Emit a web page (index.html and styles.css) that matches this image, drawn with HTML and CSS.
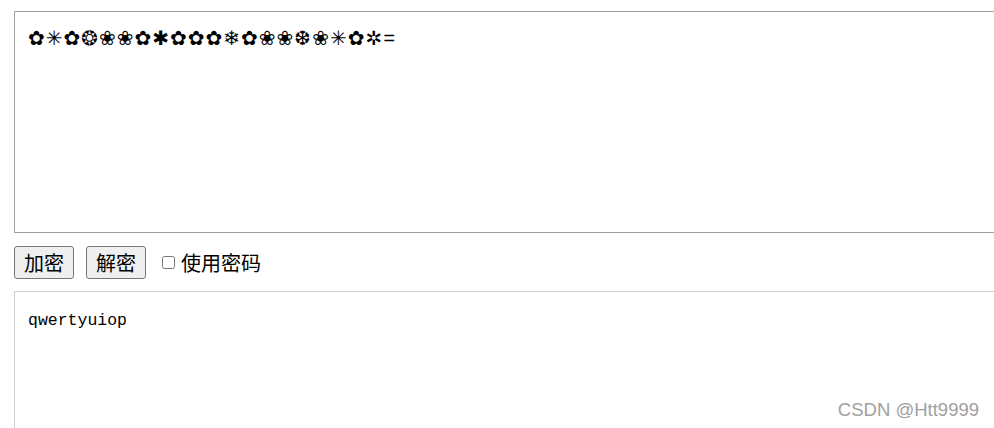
FILE: index.html
```html
<!DOCTYPE html>
<html lang="zh">
<head>
<meta charset="utf-8">
<title>加密解密</title>
<link rel="stylesheet" href="styles.css">
</head>
<body>
<div class="page">
  <textarea class="box box-top">✿✳✿❂❀❀✿✱✿✿✿❄✿❀❀❆❀✳✿✲=</textarea>
  <div class="controls">
    <button class="btn" type="button">加密</button>
    <button class="btn" type="button">解密</button>
    <label class="opt"><input type="checkbox" class="chk">使用密码</label>
  </div>
  <textarea class="box box-bottom">qwertyuiop</textarea>
</div>
<div class="watermark">CSDN @Htt9999</div>
</body>
</html>
```
FILE: styles.css
```css
html, body {
  margin: 0;
  padding: 0;
  overflow: hidden;
  background: #fff;
}
.page {
  padding: 11px 0 0 14px;
  display: flex;
  flex-direction: column;
  align-items: flex-start;
}
.box {
  box-sizing: border-box;
  width: 1100px;
  margin: 0;
  resize: none;
  outline: none;
  background: #fff;
  color: #000;
  font-family: "Liberation Mono", "DejaVu Sans", "Noto Sans CJK SC", monospace;
  font-size: 16.5px;
  line-height: 20px;
  padding: 18px 13px;
}
.box-top {
  height: 222px;
  border: 1px solid #a0a0a0;
  font-size: 20px;
  line-height: 22px;
  letter-spacing: 1px;
  padding-top: 17px;
}
.box-bottom {
  height: 200px;
  border: 1px solid #cfcfcf;
  padding-top: 19px;
}
.controls {
  display: flex;
  align-items: center;
  margin: 13px 0 12px;
  font-family: "Noto Sans CJK SC", sans-serif;
  font-size: 20px;
}
.btn {
  font-family: "Noto Sans CJK SC", sans-serif;
  font-size: 20px;
  height: 33px;
  padding: 0 9px;
  margin: 0 12px 0 0;
  background: #efefef;
  border: 1px solid #767676;
  border-radius: 3px;
  color: #000;
  line-height: 1;
}
.opt {
  display: flex;
  align-items: center;
  margin-left: 4px;
  color: #000;
}
.chk {
  width: 13px;
  height: 13px;
  margin: 0 6px 0 0;
}
.watermark {
  position: absolute;
  right: 15px;
  bottom: 7px;
  font-family: "Liberation Sans", sans-serif;
  font-size: 18.5px;
  color: #a0a0a0;
}
```
